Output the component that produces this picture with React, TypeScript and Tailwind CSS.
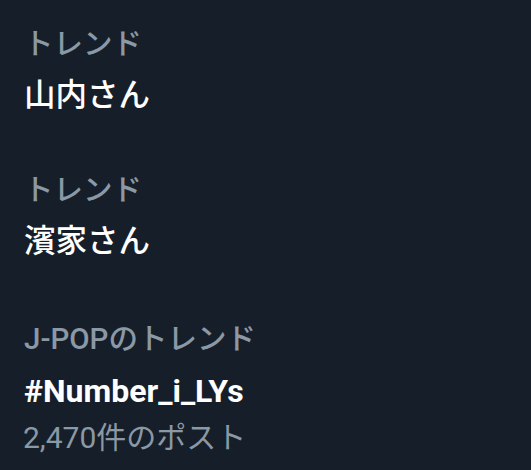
const trends = [
  { label: 'トレンド', title: '山内さん', bold: false },
  { label: 'トレンド', title: '濱家さん', bold: false },
  { label: 'J-POPのトレンド', title: '#Number_i_LYs', bold: true, count: '2,470件のポスト' },
]

export default function App() {
  return (
    <div
      className="w-[531px] h-[470px] overflow-hidden bg-[#161f29] px-6 pt-[20px] flex flex-col"
      style={{ fontFamily: "Roboto, 'Noto Sans CJK JP', sans-serif" }}
    >
      {trends.map((t, i) => (
        <div key={i} className={i === 0 ? 'mb-[42px]' : i === 1 ? 'mb-[45px]' : ''}>
          <div className="text-[29.5px] leading-[48px] font-medium text-[#8b98a5] whitespace-nowrap">{t.label}</div>
          <div
            className={`whitespace-nowrap text-white leading-[56px] ${t.bold ? 'text-[32px] font-bold' : 'text-[31.5px] font-medium'}`}
          >
            {t.title}
          </div>
          {t.count && (
            <div className="text-[30px] leading-[38px] text-[#8b98a5] whitespace-nowrap -ml-[1px]">{t.count}</div>
          )}
        </div>
      ))}
    </div>
  )
}
